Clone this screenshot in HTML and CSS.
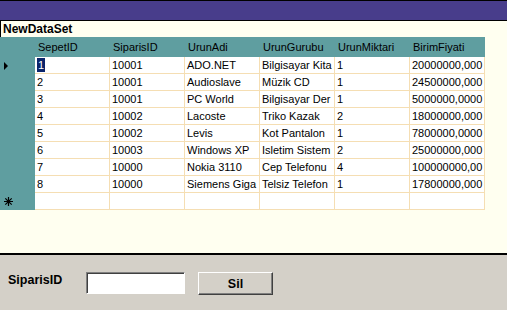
FILE: index.html
```html
<!DOCTYPE html>
<html lang="tr">
<head>
    <meta charset="UTF-8">
    <title>NewDataSet</title>
    <link rel="stylesheet" href="styles.css">
</head>
<body>
    <div class="titlebar"></div>

    <div class="grid-area">
        <div class="caption">NewDataSet</div>
        <table class="datagrid">
            <colgroup>
                <col class="col-rh">
                <col class="col-data"><col class="col-data"><col class="col-data">
                <col class="col-data"><col class="col-data"><col class="col-data">
            </colgroup>
            <thead>
                <tr>
                    <th class="rh"></th>
                    <th>SepetID</th>
                    <th>SiparisID</th>
                    <th>UrunAdi</th>
                    <th>UrunGurubu</th>
                    <th>UrunMiktari</th>
                    <th>BirimFiyati</th>
                </tr>
            </thead>
            <tbody>
                <tr>
                    <td class="rh"><span class="arrow"></span></td>
                    <td><span class="selected">1</span></td>
                    <td>10001</td><td>ADO.NET</td><td>Bilgisayar Kita</td><td>1</td><td>20000000,000</td>
                </tr>
                <tr>
                    <td class="rh"></td>
                    <td>2</td><td>10001</td><td>Audioslave</td><td>Müzik CD</td><td>1</td><td>24500000,000</td>
                </tr>
                <tr>
                    <td class="rh"></td>
                    <td>3</td><td>10001</td><td>PC World</td><td>Bilgisayar Der</td><td>1</td><td>5000000,0000</td>
                </tr>
                <tr>
                    <td class="rh"></td>
                    <td>4</td><td>10002</td><td>Lacoste</td><td>Triko Kazak</td><td>2</td><td>18000000,000</td>
                </tr>
                <tr>
                    <td class="rh"></td>
                    <td>5</td><td>10002</td><td>Levis</td><td>Kot Pantalon</td><td>1</td><td>7800000,0000</td>
                </tr>
                <tr>
                    <td class="rh"></td>
                    <td>6</td><td>10003</td><td>Windows XP</td><td>Isletim Sistem</td><td>2</td><td>25000000,000</td>
                </tr>
                <tr>
                    <td class="rh"></td>
                    <td>7</td><td>10000</td><td>Nokia 3110</td><td>Cep Telefonu</td><td>4</td><td>100000000,00</td>
                </tr>
                <tr>
                    <td class="rh"></td>
                    <td>8</td><td>10000</td><td>Siemens Giga</td><td>Telsiz Telefon</td><td>1</td><td>17800000,000</td>
                </tr>
                <tr>
                    <td class="rh">
                        <svg class="newrow" width="9" height="9" viewBox="0 0 9 9">
                            <path d="M4.5 0V9M0 4.5H9M1.3 1.3L7.7 7.7M7.7 1.3L1.3 7.7" stroke="#000" stroke-width="1.2" fill="none"/>
                        </svg>
                    </td>
                    <td></td><td></td><td></td><td></td><td></td><td></td>
                </tr>
            </tbody>
        </table>
    </div>

    <div class="bottom-panel">
        <label class="field-label" for="siparisId">SiparisID</label>
        <input type="text" id="siparisId" class="textbox">
        <button type="button" class="btn">Sil</button>
    </div>
</body>
</html>
```

FILE: styles.css
```css
/* form */
body {
    margin: 0;
    width: 507px;
    height: 310px;
    overflow: hidden;
    background-color: #d4d0c8;
    font-family: "Liberation Sans", Arial, sans-serif;
    font-size: 11px;
    color: #000;
}
.titlebar {
    height: 19px;
    background-color: #483d8b;
    border-top: 1px solid #000;
    border-bottom: 1px solid #000;
}

/* datagrid */
.grid-area {
    height: 232px;
    background-color: #fffff0;
    border-bottom: 2px solid #000;
}
.caption {
    height: 16px;
    line-height: 16px;
    padding-left: 2px;
    border-left: 1px solid #000;
    font-size: 12px;
    font-weight: bold;
}
.datagrid {
    table-layout: fixed;
    border-collapse: separate;
    border-spacing: 0;
    width: 485px;
}
.col-rh {
    width: 35px;
}
.col-data {
    width: 75px;
}
.datagrid th {
    height: 20px;
    padding: 0 3px;
    background-color: #5f9ea0;
    font-weight: normal;
    text-align: left;
    white-space: nowrap;
    overflow: hidden;
}
.datagrid td {
    box-sizing: content-box;
    height: 16px;
    line-height: 16px;
    padding: 0 0 0 2px;
    background-color: #fff;
    border-right: 1px solid #f5deb3;
    border-bottom: 1px solid #f5deb3;
    white-space: nowrap;
    overflow: hidden;
}
.datagrid td.rh,
.datagrid th.rh {
    padding: 0 0 0 4px;
    background-color: #5f9ea0;
    border: none;
}
.arrow {
    display: block;
    width: 0;
    height: 0;
    border-top: 4px solid transparent;
    border-bottom: 4px solid transparent;
    border-left: 4px solid #000;
}
.newrow {
    display: block;
}
.selected {
    display: inline-block;
    line-height: 14px;
    padding: 0 1px;
    background-color: #0a246a;
    color: #fff;
}

/* bottom */
.bottom-panel {
    display: flex;
    align-items: flex-start;
    padding: 17px 0 0 8px;
}
.field-label {
    width: 78px;
    margin-top: 1px;
    line-height: 14px;
    font-size: 12.5px;
    font-weight: bold;
}
.textbox {
    box-sizing: border-box;
    width: 99px;
    height: 22px;
    margin: 0;
    padding: 0 3px;
    background: #fff;
    border: 1px solid;
    border-color: #808080 #fff #fff #808080;
    box-shadow: inset 1px 1px 0 #404040;
    outline: none;
}
.btn {
    box-sizing: border-box;
    width: 75px;
    height: 23px;
    margin: 0 0 0 13px;
    padding: 0;
    background-color: #d4d0c8;
    border: 1px solid;
    border-color: #fff #404040 #404040 #fff;
    box-shadow: inset -1px -1px 0 #808080;
    font-family: "Liberation Sans", Arial, sans-serif;
    font-size: 12.5px;
    font-weight: bold;
    color: #000;
}
```
